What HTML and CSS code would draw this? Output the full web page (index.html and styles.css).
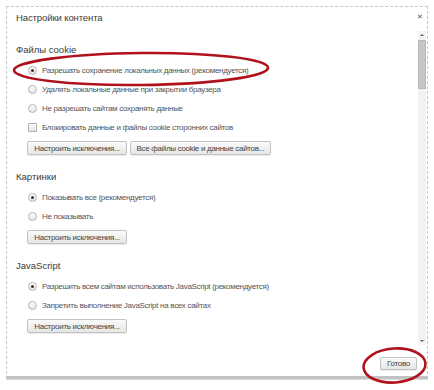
FILE: index.html
```html
<!DOCTYPE html>
<html lang="ru">
<head>
    <meta charset="UTF-8">
    <title>Настройки контента</title>
    <link rel="stylesheet" href="styles.css">
</head>
<body>
    <div class="page">
        <div class="dialog">
            <div class="header">
                <span class="title">Настройки контента</span>
                <span class="close">&#x2715;</span>
            </div>

            <div class="main">
                <div class="content">
                    <div class="section first">
                        <div class="heading">Файлы cookie</div>
                        <div class="row"><span class="radio checked"></span>Разрешать сохранение локальных данных (рекомендуется)</div>
                        <div class="row"><span class="radio"></span>Удалять локальные данные при закрытии браузера</div>
                        <div class="row"><span class="radio"></span>Не разрешать сайтам сохранять данные</div>
                        <div class="row"><span class="check"></span>Блокировать данные и файлы cookie сторонних сайтов</div>
                        <div class="buttons">
                            <button class="btn wide" type="button">Настроить исключения...</button>
                            <button class="btn all" type="button">Все файлы cookie и данные сайтов...</button>
                        </div>
                    </div>

                    <div class="section">
                        <div class="heading">Картинки</div>
                        <div class="row"><span class="radio checked"></span>Показывать все (рекомендуется)</div>
                        <div class="row"><span class="radio"></span>Не показывать</div>
                        <div class="buttons">
                            <button class="btn wide" type="button">Настроить исключения...</button>
                        </div>
                    </div>

                    <div class="section">
                        <div class="heading">JavaScript</div>
                        <div class="row"><span class="radio checked"></span>Разрешить всем сайтам использовать JavaScript (рекомендуется)</div>
                        <div class="row"><span class="radio"></span>Запретить выполнение JavaScript на всех сайтах</div>
                        <div class="buttons">
                            <button class="btn wide" type="button">Настроить исключения...</button>
                        </div>
                    </div>
                </div>

                <div class="scrollbar">
                    <div class="arrow up"></div>
                    <div class="track">
                        <div class="thumb"></div>
                    </div>
                    <div class="arrow down"></div>
                </div>
            </div>

            <div class="footer">
                <button class="btn done" type="button">Готово</button>
            </div>
        </div>

        <!-- red marker circles drawn over the screenshot -->
        <svg class="marks" width="434" height="390" viewBox="0 0 434 390">
            <ellipse cx="141" cy="69" rx="127" ry="16" transform="rotate(-0.6 141 69)" />
            <ellipse cx="394.5" cy="365.5" rx="31" ry="17" transform="rotate(-4 394.5 365.5)" />
        </svg>
    </div>
</body>
</html>
```

FILE: styles.css
```css
body {
    margin: 0;
    background: #ffffff;
    font-family: "Liberation Sans", Arial, sans-serif;
    color: #444;
}

.page {
    position: relative;
    width: 434px;
    height: 390px;
    padding: 6px 0 0 6px;
    box-sizing: border-box;
}

.dialog {
    width: 422px;
    height: 373px;
    box-sizing: border-box;
    border: 1px dashed #c6c6c6;
    border-bottom: 3px solid #c2c2c2;
    box-shadow: 0 1px 0 #dcdcdc;
    display: flex;
    flex-direction: column;
    background: #fff;
}

.header {
    height: 24px;
    display: flex;
    justify-content: space-between;
    align-items: flex-start;
    padding: 4px 0 0 9px;
    box-sizing: border-box;
}

.title {
    font-size: 9.5px;
    line-height: 14px;
    color: #3a3a3a;
    letter-spacing: -0.1px;
}

.close {
    font-size: 7px;
    line-height: 8px;
    color: #555;
    margin: 2px 4px 0 0;
}

.main {
    flex: 1;
    display: flex;
    min-height: 0;
}

.content {
    flex: 1;
    padding-left: 9px;
    overflow: hidden;
}

.section {
    margin-top: 15px;
}

.section.first {
    margin-top: 12px;
}

.heading {
    font-size: 9.5px;
    line-height: 14px;
    color: #3a3a3a;
    margin-bottom: 4px;
}

.row {
    height: 19px;
    display: flex;
    align-items: center;
    margin-left: 12px;
    font-size: 8px;
    letter-spacing: -0.3px;
    color: #555;
    white-space: nowrap;
}

.radio {
    width: 7px;
    height: 7px;
    border: 1px solid #b4b4b4;
    border-radius: 50%;
    background: linear-gradient(#fdfdfd, #e4e4e4);
    margin-right: 5px;
    display: flex;
    align-items: center;
    justify-content: center;
}

.radio.checked::after {
    content: "";
    width: 3px;
    height: 3px;
    border-radius: 50%;
    background: #333;
}

.check {
    width: 7px;
    height: 7px;
    border: 1px solid #b0b0b0;
    border-radius: 1px;
    background: linear-gradient(#fdfdfd, #e6e6e6);
    margin-right: 5px;
}

.buttons {
    display: flex;
    gap: 3px;
    margin: 4px 0 0 11px;
}

.btn {
    height: 14px;
    padding: 0;
    font-family: "Liberation Sans", Arial, sans-serif;
    font-size: 8px;
    letter-spacing: -0.3px;
    white-space: nowrap;
    color: #444;
    border: 1px solid #c2c2c2;
    border-radius: 2px;
    background: linear-gradient(#fafafa, #e6e6e6);
    box-shadow: 0 1px 0 #ececec;
}

.btn.wide {
    width: 100px;
}

.btn.all {
    width: 141px;
}

.scrollbar {
    width: 8px;
    margin-right: 1px;
    display: flex;
    flex-direction: column;
    background: #f2f2f2;
    margin-bottom: 2px;
}

.arrow {
    height: 8px;
    display: flex;
    align-items: center;
    justify-content: center;
}

.arrow::after {
    content: "";
    border-left: 2px solid transparent;
    border-right: 2px solid transparent;
}

.arrow.up::after {
    border-bottom: 2px solid #666;
}

.arrow.down::after {
    border-top: 2px solid #666;
}

.track {
    flex: 1;
    padding-top: 1px;
}

.thumb {
    height: 49px;
    background: #c6c6c6;
    border: 1px solid #b8b8b8;
    box-sizing: border-box;
}

.footer {
    height: 29px;
    display: flex;
    justify-content: flex-end;
    align-items: flex-start;
    padding: 10px 10px 0 0;
    box-sizing: border-box;
}

.btn.done {
    height: 13px;
    width: 37px;
}

.marks {
    position: absolute;
    left: 0;
    top: 0;
    pointer-events: none;
}

.marks ellipse {
    fill: none;
    stroke: #b0121c;
    stroke-width: 2.6;
}
```
